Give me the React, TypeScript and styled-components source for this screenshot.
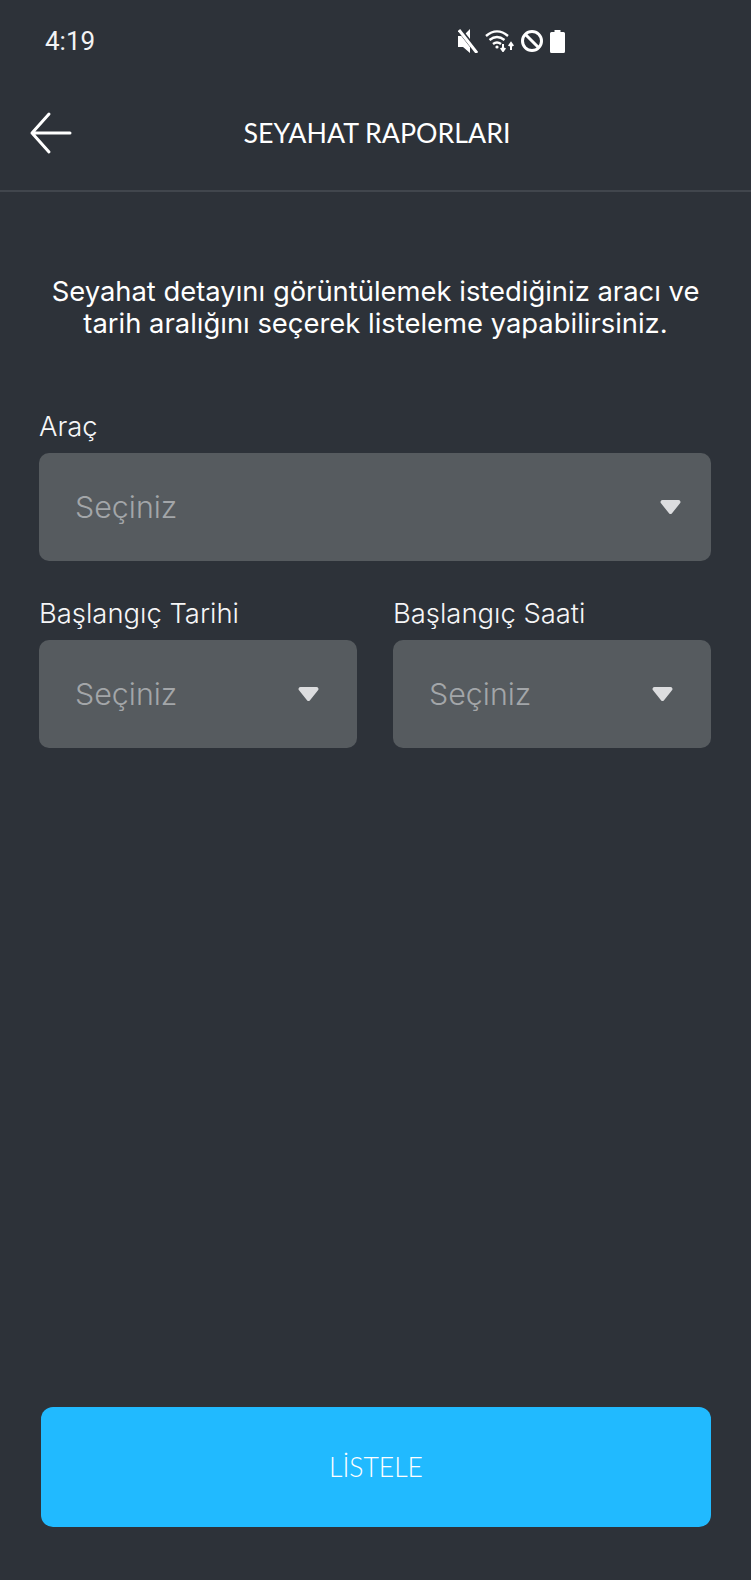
import styled, { createGlobalStyle } from "styled-components";

const GlobalStyle = createGlobalStyle`
  html, body {
    margin: 0;
    padding: 0;
    background: #2d3239;
  }
  * {
    box-sizing: border-box;
  }
`;

const Screen = styled.div`
  width: 751px;
  height: 1580px;
  display: flex;
  flex-direction: column;
  background: #2d3239;
  color: #fff;
  font-family: Inter, Lato, sans-serif;
  overflow: hidden;
`;

const StatusBar = styled.div`
  height: 82px;
  padding: 0 0 0 45px;
  display: flex;
  align-items: center;
  justify-content: space-between;
`;

const Clock = styled.span`
  font-family: Roboto, sans-serif;
  font-size: 26px;
  line-height: 1;
  color: #f2f3f4;
`;

const StatusIcons = styled.div`
  display: flex;
  align-items: center;
  gap: 7px;
  margin-right: 186px;
`;

const Header = styled.header`
  height: 110px;
  padding-bottom: 7px;
  display: grid;
  grid-template-columns: 110px 1fr 110px;
  align-items: center;
  border-bottom: 2px solid #41464d;
`;

const BackButton = styled.button`
  width: 50px;
  height: 50px;
  margin-left: 26px;
  padding: 0;
  border: 0;
  background: none;
  cursor: pointer;
`;

const Title = styled.h1`
  margin: 0;
  padding-left: 3px;
  text-align: center;
  font-family: Lato, sans-serif;
  font-size: 26.800px;
  font-weight: 400;
  color: #fff;
`;

const Intro = styled.p`
  margin: 83px 0 0;
  padding: 0 20px;
  text-align: center;
  font-size: 27.400px;
  font-weight: 400;
  line-height: 32px;
`;

const Form = styled.div`
  padding: 0 40px 0 39px;
  margin-top: 70px;
  display: flex;
  flex-direction: column;
  gap: 35px;
`;

const Row = styled.div`
  display: grid;
  grid-template-columns: 318px 318px;
  justify-content: space-between;
`;

const Field = styled.div`
  display: flex;
  flex-direction: column;
  gap: 10px;
`;

const Label = styled.label`
  font-size: 27.400px;
  font-weight: 300;
  line-height: 34px;
  color: #f6f6f7;
`;

const Select = styled.div<{ $compact?: boolean }>`
  height: 108px;
  padding: 0 ${({ $compact }) => ($compact ? "38px" : "30px")} 0 36px;
  display: flex;
  align-items: center;
  justify-content: space-between;
  background: #565b5f;
  border-radius: 10px;
`;

const Placeholder = styled.span`
  font-size: 30.400px;
  font-weight: 300;
  color: #a3a6a9;
`;

const Footer = styled.div`
  margin-top: auto;
  padding: 0 40px 53px 41px;
`;

const SubmitButton = styled.button`
  width: 100%;
  height: 120px;
  border: 0;
  border-radius: 12px;
  background: #21baff;
  color: #fff;
  font-family: Lato, sans-serif;
  font-size: 26.500px;
  font-weight: 300;
  cursor: pointer;
`;

const MuteIcon = () => (
  <svg width="20" height="24" viewBox="0 0 20 24">
    <path d="M0 7h5l7-7v24l-7-6H0z" fill="#fff" />
    <path d="M1 0l18 23" stroke="#2d3239" strokeWidth="5" />
    <path d="M1 1l18 23" stroke="#fff" strokeWidth="3" />
  </svg>
);

const WifiIcon = () => (
  <svg width="29" height="22" viewBox="0 0 29 22" fill="none" stroke="#fff" strokeWidth="2.400">
    <path d="M1 6c7-6 15-6 22 0" />
    <path d="M4.500 10c5-4 10-4 15 0" />
    <path d="M8 14c2.500-2 5.500-2 8 0" />
    <circle cx="12" cy="17" r="1.600" fill="#fff" stroke="none" />
    <path d="M18 14v6M15.800 18l2.200 3 2.200-3" strokeWidth="2" />
    <path d="M26 20v-6M23.800 16l2.200-3 2.200 3" strokeWidth="2" />
  </svg>
);

const BlockIcon = () => (
  <svg width="22" height="22" viewBox="0 0 22 22" fill="none" stroke="#fff" strokeWidth="3">
    <circle cx="11" cy="11" r="9.500" />
    <path d="M4.500 4.500l13 13" />
  </svg>
);

const BatteryIcon = () => (
  <svg width="15" height="23" viewBox="0 0 15 23">
    <path d="M4.500 0h6v2h3a1.500 1.500 0 0 1 1.500 1.500V21.500a1.500 1.500 0 0 1-1.500 1.500h-12A1.500 1.500 0 0 1 0 21.500V3.500A1.500 1.500 0 0 1 1.500 2h3z" fill="#fff" />
  </svg>
);

const BackIcon = () => (
  <svg width="50" height="50" viewBox="0 0 50 50" fill="none" stroke="#fff" strokeWidth="3" strokeLinecap="round" strokeLinejoin="round">
    <path d="M44 25H6M23 6L6 25l17 19" />
  </svg>
);

const Caret = () => (
  <svg width="21" height="14" viewBox="0 0 21 14">
    <path d="M2.500 0h16a2 2 0 0 1 1.500 3.300l-8 10a2 2 0 0 1-3 0L1 3.300A2 2 0 0 1 2.500 0z" fill="#dcdddf" />
  </svg>
);

const SelectField = ({ label, compact }: { label: string; compact?: boolean }) => (
  <Field>
    <Label>{label}</Label>
    <Select $compact={compact}>
      <Placeholder>Seçiniz</Placeholder>
      <Caret />
    </Select>
  </Field>
);

const App = () => {
  return (
    <Screen>
      <GlobalStyle />
      <StatusBar>
        <Clock>4:19</Clock>
        <StatusIcons>
          <MuteIcon />
          <WifiIcon />
          <BlockIcon />
          <BatteryIcon />
        </StatusIcons>
      </StatusBar>
      <Header>
        <BackButton aria-label="Geri">
          <BackIcon />
        </BackButton>
        <Title>SEYAHAT RAPORLARI</Title>
      </Header>
      <Intro>
        Seyahat detayını görüntülemek istediğiniz aracı ve
        <br />
        tarih aralığını seçerek listeleme yapabilirsiniz.
      </Intro>
      <Form>
        <SelectField label="Araç" />
        <Row>
          <SelectField label="Başlangıç Tarihi" compact />
          <SelectField label="Başlangıç Saati" compact />
        </Row>
      </Form>
      <Footer>
        <SubmitButton>LİSTELE</SubmitButton>
      </Footer>
    </Screen>
  );
};

export default App;
